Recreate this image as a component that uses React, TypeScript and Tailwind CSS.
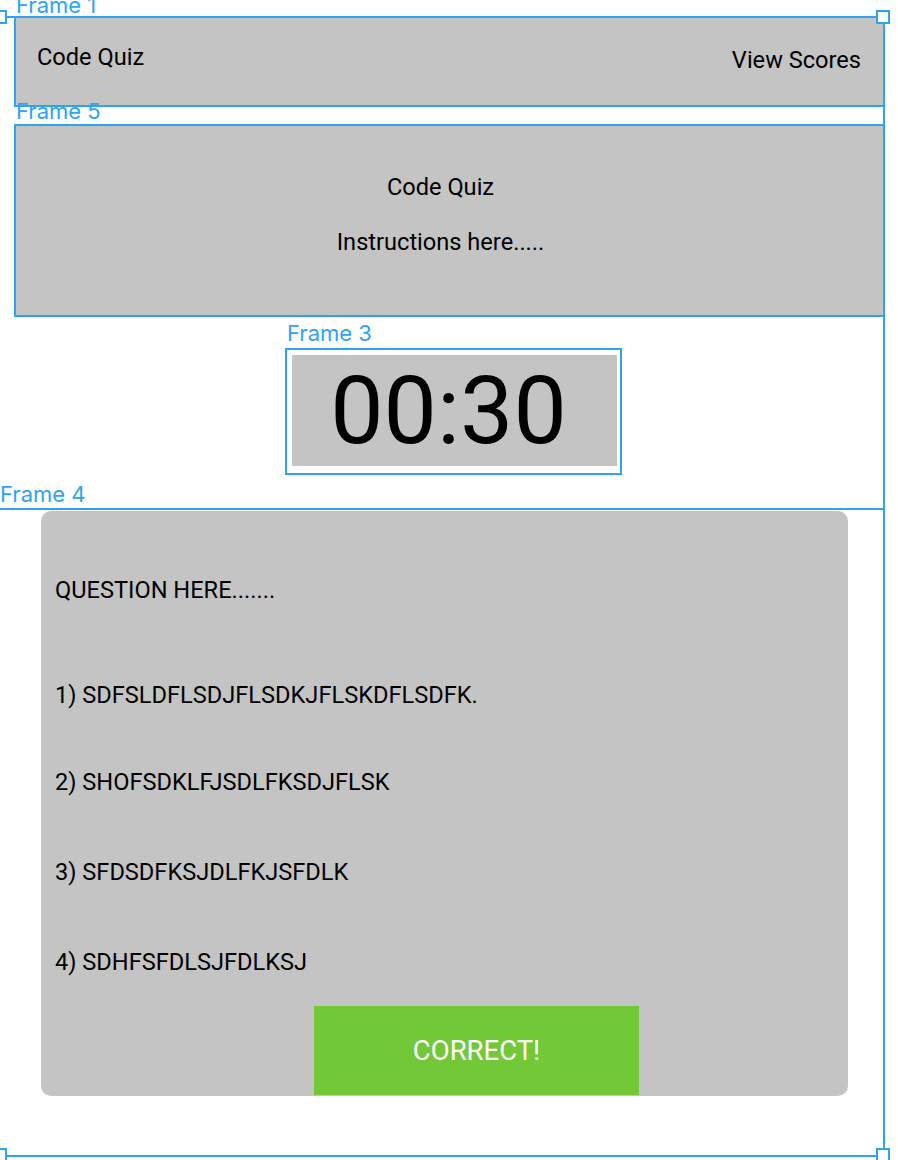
import React from "react";

const blue = "border-[#2ea3f2]";

function FrameLabel({ children, className }: { children: React.ReactNode; className: string }) {
  return (
    <span
      className={`absolute text-[22px] leading-none text-[#2ea3f2] whitespace-nowrap ${className}`}
      style={{ fontFamily: "Inter, 'Liberation Sans', sans-serif" }}
    >
      {children}
    </span>
  );
}

function Handle({ className }: { className: string }) {
  return <span className={`absolute w-[14px] h-[14px] bg-white border-2 ${blue} ${className}`} />;
}

export default function App() {
  const answers = [
    { text: "1) SDFSLDFLSDJFLSDKJFLSKDFLSDFK.", mt: "mt-[81px]" },
    { text: "2) SHOFSDKLFJSDLFKSDJFLSK", mt: "mt-[63px]" },
    { text: "3) SFDSDFKSJDLFKJSFDLK", mt: "mt-[66px]" },
    { text: "4) SDHFSFDLSJFDLKSJ", mt: "mt-[66px]" },
  ];

  return (
    <div
      className="relative w-[898px] h-[1160px] bg-white overflow-hidden text-black"
      style={{ fontFamily: "Roboto, 'Liberation Sans', sans-serif" }}
    >
      <div className="flex flex-col">
        {/* Frame 1 - header */}
        <div className={`relative mt-[16px] ml-[14px] w-[871px] h-[91px] bg-[#c4c4c4] border-2 ${blue} flex justify-between`}>
          <FrameLabel className="left-[0px] -top-[24px]">Frame 1</FrameLabel>
          <span className="mt-[26px] ml-[21px] text-[23.6px] leading-[26px]">Code Quiz</span>
          <span className="mt-[29px] mr-[22px] text-[23.6px] leading-[26px]">View Scores</span>
        </div>

        {/* Frame 5 - intro */}
        <div className={`relative mt-[17px] ml-[14px] w-[871px] h-[193px] bg-[#c4c4c4] border-2 ${blue} flex flex-col items-center pr-[18px]`}>
          <FrameLabel className="left-[0px] -top-[26px]">Frame 5</FrameLabel>
          <span className="mt-[48px] text-[23.6px] leading-[26px]">Code Quiz</span>
          <span className="mt-[29px] text-[23.6px] leading-[26px]">Instructions here.....</span>
        </div>

        {/* Frame 3 - timer */}
        <div className={`relative mt-[31px] ml-[285px] w-[337px] h-[127px] border-2 ${blue} bg-white p-[5px]`}>
          <FrameLabel className="left-[0px] -top-[28px]">Frame 3</FrameLabel>
          <div className="w-[325px] h-[111px] bg-[#c4c4c4] flex items-center justify-center pr-[12px]">
            <span className="text-[95px] leading-none">00:30</span>
          </div>
        </div>

        {/* Frame 4 - question */}
        <div className={`relative mt-[33px] w-[885px] h-[650px] border-t-2 ${blue} pt-[1px]`}>
          <FrameLabel className="left-[0px] -top-[27px]">Frame 4</FrameLabel>
          <div className="ml-[41px] w-[807px] h-[585px] bg-[#c4c4c4] rounded-[10px] flex flex-col pl-[14px]">
            <span className="mt-[67px] text-[23.6px] leading-[24px]">QUESTION HERE.......</span>
            {answers.map((a) => (
              <span key={a.text} className={`${a.mt} text-[23.6px] leading-[24px]`}>
                {a.text}
              </span>
            ))}
            <div className="mt-[32px] ml-[259px] w-[325px] h-[89px] bg-[#72c837] flex items-center justify-center">
              <span className="text-[27.5px] leading-none text-white">CORRECT!</span>
            </div>
          </div>
        </div>
      </div>

      {/* selection outline */}
      <div className={`absolute left-[-2px] top-[16px] w-[887px] h-[1141px] border-2 ${blue} pointer-events-none`} />
      <Handle className="left-[-7px] top-[10px]" />
      <Handle className="left-[876px] top-[10px]" />
      <Handle className="left-[-7px] top-[1148px]" />
      <Handle className="left-[876px] top-[1148px]" />
    </div>
  );
}
